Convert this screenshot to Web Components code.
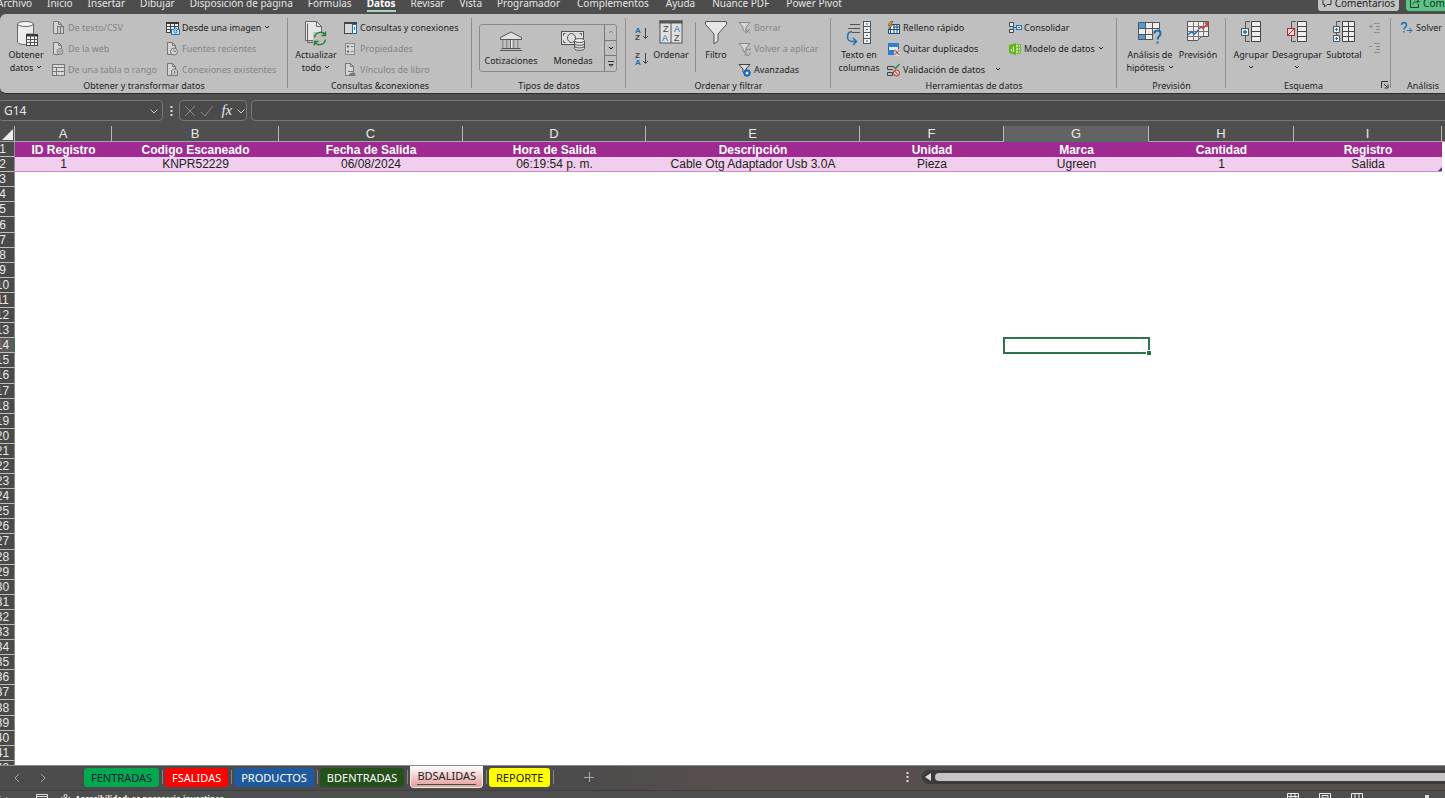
<!DOCTYPE html>
<html lang="es">
<head>
<meta charset="utf-8">
<title>Libro - BDSALIDAS</title>
<style>
  html, body { height: 100%; margin: 0; }
  body { overflow: hidden; background: #4f4f4f; font-family: "Noto Sans", "Open Sans", sans-serif; }
</style>
</head>
<body>
<excel-app></excel-app>
<script>
const DOC = (c = '#777') => `<path d="M1.5 .5h5l3 3v9h-8z" fill="#d4d4d4" stroke="${c}"/><path d="M6.5 .5v3h3" fill="none" stroke="${c}"/>`;
const FUNNEL = c => `<path d="M1 1.5h11L8 6v5.500L5 9V6z" fill="#d8d8d8" stroke="${c}"/>`;
const LETTER_AZ = (top, bottom, tc, bc) => `<g font-size="8" font-weight="700" font-family="Liberation Sans, sans-serif"><text x="0" y="7" fill="${tc}">${top}</text><text x="0" y="14" fill="${bc}">${bottom}</text></g><path d="M10.500 2v10.500M8 10l2.500 2.500 2.500-2.500" fill="none" stroke="#444"/>`;
/* Each entry: [width, height, markup] */
const ICONS = {
  getdata: [24, 28, `<path d="M3.500 4v18c0 1.500 3 2.500 8 2.500h1V14h7V4" fill="#ececec" stroke="#666"/><ellipse cx="11.500" cy="4" rx="8" ry="2.500" fill="#f4f4f4" stroke="#666"/><rect x="12.500" y="14.500" width="11" height="11" fill="#f4f4f4" stroke="#444"/><path d="M12 15.500h12" stroke="#333" stroke-width="2"/><path d="M12.500 19.500h11M12.500 22.500h11M16.500 15v10.500M20.500 15v10.500" stroke="#555"/>`],
  csv: [13, 14, DOC() + `<rect x="5.500" y="5.500" width="6" height="7" fill="#c8c8c8" stroke="#777"/><path d="M8.500 6v6" stroke="#777"/>`],
  web: [13, 14, DOC() + `<circle cx="8" cy="9.500" r="3" fill="#ccc" stroke="#888"/><path d="M5 9.500h6M8 6.500v6" stroke="#999"/>`],
  range: [13, 14, `<rect x=".5" y="1.500" width="12" height="11" fill="#d8d8d8" stroke="#777"/><path d="M.5 4.500h12M.5 8.500h12M4.500 4v8.500" stroke="#777"/>`],
  picture: [14, 14, `<rect x=".5" y="1.500" width="12" height="10" fill="#eee" stroke="#444"/><path d="M.5 2h12" stroke="#333" stroke-width="2"/><path d="M.5 5.500h12M.5 8.500h12M4.500 2v9M8.500 2v9" stroke="#444"/><path d="M5.500 8.500h2l1-1.500h2l1 1.500h2v5h-8z" fill="#d5e8f8" stroke="#1c6db5"/><circle cx="9.500" cy="10.500" r="1.500" fill="none" stroke="#1c6db5"/>`],
  recent: [13, 14, DOC() + `<circle cx="8" cy="9.500" r="3.500" fill="#d4d4d4" stroke="#777"/><path d="M8 7.500v2h2" fill="none" stroke="#777"/>`],
  existing: [13, 14, DOC() + `<path d="M5.500 12.500v-5l2-1.500h2l2 2v4.500z" fill="#c8c8c8" stroke="#777"/><path d="M8.500 8v3" stroke="#777"/>`],
  refresh: [24, 26, `<path d="M1.500 20.500V1.500h11l5 5v14z" fill="#e6e6e6" stroke="#666"/><path d="M3.500 3.500v19h8" fill="none" stroke="#666"/><path d="M12.500 1.500v5h5" fill="none" stroke="#666"/><path d="M9 12h14v13H9z" fill="#bfbfbf"/><path d="M10.500 17.500a6 6 0 0 1 10.500-3M21.500 19.500a6 6 0 0 1-10.500 3M21.500 11.500v4h-4M10.500 25.500v-4h4" fill="none" stroke="#2f7d3a" stroke-width="1.500"/>`],
  queries: [13, 14, `<rect x=".5" y="1.500" width="12" height="11" fill="#d8d8d8" stroke="#444"/><path d="M.5 2h12" stroke="#444" stroke-width="2"/><rect x="8.500" y="3.500" width="4" height="9" fill="#eef6ff" stroke="#1c6db5"/><path d="M10.500 6v3" stroke="#1c6db5"/>`],
  props: [13, 14, `<rect x="1.500" y="1.500" width="9" height="11" fill="#d6d6d6" stroke="#888"/><path d="M3 4.500h2M3 9.500h2" stroke="#666" stroke-width="2"/><path d="M6.500 4.500h3M6.500 9.500h3" stroke="#888"/>`],
  links: [13, 14, DOC() + `<path d="M4 8.500h4a1.500 1.500 0 0 1 0 3H5M6 10.500h5v2H6" fill="none" stroke="#777"/>`],
  bank: [24, 20, `<path d="M1.500 6.500L12 1l10.500 5.500v2h-21z" fill="#e0e0e0" stroke="#555"/><path d="M4.500 9v8M8.500 9v8M12 9v8M15.500 9v8M19.500 9v8" stroke="#666" stroke-width="2"/><path d="M5 9v8M9 9v8M12.500 9v8M16 9v8M20 9v8" stroke="#eee"/><path d="M2.500 17.500h19M1 19.500h22" stroke="#555"/>`],
  money: [26, 22, `<rect x="1.500" y="2.500" width="22" height="13" fill="#e0e0e0" stroke="#555"/><path d="M3.500 6.500v-2h2M21.500 6.500v-2h-2M3.500 11.500v2h2" fill="none" stroke="#555"/><ellipse cx="11.500" cy="9" rx="4" ry="4.500" fill="none" stroke="#555"/><path d="M14.500 12v7.500c0 2.500 10 2.500 10 0V12" fill="#e0e0e0" stroke="#555"/><ellipse cx="19.500" cy="11.500" rx="5" ry="2" fill="#eee" stroke="#555"/><path d="M14.500 14.500c0 2.500 10 2.500 10 0M14.500 17c0 2.500 10 2.500 10 0" fill="none" stroke="#555"/>`],
  az: [14, 15, LETTER_AZ('A', 'Z', '#1c6db5', '#444')],
  za: [14, 15, LETTER_AZ('Z', 'A', '#444', '#1c6db5')],
  sort: [24, 24, `<rect x="1" y="1" width="22" height="22" fill="#e0e0e0" stroke="#555"/><path d="M.5 2h23" stroke="#555" stroke-width="3"/><path d="M12 3v20" stroke="#555"/><g font-family="Liberation Sans, sans-serif" font-size="9"><text x="4" y="12" fill="#444">Z</text><text x="3" y="21" fill="#1c6db5">A</text><text x="15" y="12" fill="#1c6db5">A</text><text x="15" y="21" fill="#444">Z</text></g>`],
  filter: [24, 26, `<path d="M1.500 1.500h21v3L14 14v7l-4 3V14L1.500 4.500z" fill="#e6e6e6" stroke="#555"/>`],
  clear: [14, 14, FUNNEL('#888') + `<path d="M7.500 8l4.500 4.500M12 8l-4.500 4.500" stroke="#888"/>`],
  reapply: [14, 14, FUNNEL('#888') + `<path d="M6.500 10a3 3 0 0 1 5.500-1.500V6.500M12.500 10.500A3 3 0 0 1 7 12v1.500" fill="none" stroke="#888"/>`],
  advanced: [14, 14, FUNNEL('#444') + `<circle cx="9" cy="10" r="2.500" fill="#dbe8f4" stroke="#1c6db5" stroke-width="2"/><path d="M9 6v1.500M9 12.500V14M5 10h1.500M11.500 10H13M6 7l1 1M12 7l-1 1M6 13l1-1M12 13l-1-1" stroke="#1c6db5"/>`],
  columns: [26, 26, `<path d="M4 4.500h10M2 8.500h12M6 12.500h8" stroke="#555"/><path d="M6 11.500C0 12 0 21.500 6 21.500h4M7 18l3.500 3.500L7 25" fill="none" stroke="#2a6fb0" stroke-width="1.500"/><rect x="17.500" y="1.500" width="7" height="22" fill="#eee" stroke="#555"/><path d="M17.500 6.500h7M17.500 12.500h7M17.500 18.500h7" stroke="#555"/><path d="M20 4h2M20 9.500h2M20 15.500h2M20 21h2" stroke="#1c6db5"/>`],
  flash: [14, 14, `<path d="M3.500 3.500h9v9h-11v-5h2z" fill="#f0f4f8"/><path d="M3.500 12.500v-9h9v9zM1.500 8.500h11M1.500 12.500h11M1.500 8.500v4M7 3.500v9M10 3.500v9M6 6h6.500" fill="none" stroke="#1f4e80"/><path d="M3.500 .5L1 4.500h2L1.500 8.500 6 3.500H4L6 .5z" fill="#e8a317" stroke="#333" stroke-width=".5"/>`],
  dupes: [14, 14, `<path d="M1.500 1.500h10v11h-10z" fill="#eee" stroke="#1c5da5"/><path d="M1 1h11v4H1zM1 8h6v5H1z" fill="#2f7fd0"/><path d="M7 7h6v7H7z" fill="#d4d4d4"/><path d="M7.500 8l5 5M12.500 8l-5 5" stroke="#b52a2a"/>`],
  valid: [14, 14, `<path d="M7 3.500H.5v3H6M.5 9.500h5v3h-5z" fill="none" stroke="#444"/><path d="M6.500 3.500l2 2 4-4.500" fill="none" stroke="#2f8a3c" stroke-width="1.500"/><circle cx="9.500" cy="10" r="3" fill="#e6d5d5" stroke="#b52a2a"/><path d="M7.500 8l4 4" stroke="#b52a2a"/>`],
  consolidate: [14, 14, `<path d="M1.500 1.500h4v4h-4zM1.500 8.500h4v3h-4z" fill="#e8e8e8" stroke="#444"/><path d="M5.500 6.500h3M5.500 3.500v6" stroke="#1c6db5"/><rect x="8.500" y="4.500" width="5" height="4" fill="#dceaf8" stroke="#1c6db5"/><path d="M10 6.500h2" stroke="#1c6db5"/>`],
  model: [14, 14, `<path d="M1 3l7-2v12l-7-2z" fill="#62b41c"/><path d="M8.500 2.500h4v9h-4M8.500 5.500h4M8.500 8.500h4M10.500 3v8" fill="#c8e6a0" stroke="#6cbc28"/><path d="M3.500 9.500V7M5.500 10V4.500" stroke="#e8f8d0"/>`],
  whatif: [26, 26, `<path d="M1.500 2.500h21v17h-21z" fill="#eee"/><path d="M1.500 2.500h7v6h-7zM1.500 14h7v6h-7z" fill="#4f9be0"/><path d="M1.500 2.500h21v17h-21zM1.500 8.500h21M1.500 14.500h21M8.500 2.500v17M15.500 2.500v17" fill="none" stroke="#555"/><path d="M16 10h9v14h-9z" fill="#bfbfbf"/><path d="M17.500 13.500c0-4 6-4 6 0 0 3-3 3-3 6M20.500 21.500v2" fill="none" stroke="#1c6db5" stroke-width="2"/>`],
  forecast: [24, 24, `<path d="M1.500 1.500h21v15h-7l-4 4h-10z" fill="#eee" stroke="#555"/><path d="M1.500 6.500h21M1.500 11.500h21M1.500 16.500h14M7.500 1.500v19M12.500 1.500v18M17.500 1.500v15" stroke="#777"/><path d="M1.500 15l4-3 3 2 4-4" fill="none" stroke="#1c6db5" stroke-width="1.500"/><path d="M12.500 9l3-2 1.500 1.500 5-5.500M18.500 3h3.500v3.500" fill="none" stroke="#c23b3b" stroke-width="1.500"/>`],
  group: [22, 24, `<path d="M11.500 1.500h9v20h-9zM11.500 6.500h9M11.500 11.500h9M11.500 16.500h9" fill="#eee" stroke="#444"/><path d="M10 1.500H5.500v20H10" fill="none" stroke="#555"/><rect x="1.500" y="8.500" width="7" height="7" fill="#eee" stroke="#555"/><path d="M5 10v4M3 12h4" stroke="#1c6db5" stroke-width="1.500"/>`],
  ungroup: [22, 24, `<path d="M11.500 1.500h9v20h-9zM11.500 6.500h9M11.500 11.500h9M11.500 16.500h9" fill="#eee" stroke="#444"/><path d="M10 1.500H5.500v20H10" fill="none" stroke="#555"/><rect x="1.500" y="8.500" width="7" height="7" fill="#f0dada" stroke="#b52a2a"/><path d="M2 15l6-6" stroke="#b52a2a"/>`],
  subtotal: [24, 24, `<path d="M10.500 1.500h12v20h-12zM10.500 6.500h12M10.500 11.500h12M10.500 16.500h12M16.500 1.500v20" fill="#eee" stroke="#444"/><path d="M8.500 1.500h-4v17h4" fill="none" stroke="#555"/><path d="M1.500 6.500h6v6h-6zM1.500 15.500h6v6h-6z" fill="#eee" stroke="#555"/><path d="M4.500 8v3M3 9.500h3M4.500 17v3M3 18.500h3" stroke="#1c6db5"/>`],
  showdetail: [14, 14, `<path d="M1 5.500h4M3 3.500v4M6 2.500h6M8 5.500h4M8 8.500h4M6 11.500h6" stroke="#8c8c8c"/>`],
  hidedetail: [14, 14, `<path d="M1 4.500h3M6 1.500h6M8 4.500h4M8 7.500h4M6 10.500h6" stroke="#8c8c8c"/>`],
  solver: [14, 14, `<path d="M1.500 4c0-3.500 5-3.500 5 0 0 2.500-2.500 2-2.500 4.500M4 10v1.500" fill="none" stroke="#1c6db5" stroke-width="1.500"/><path d="M7 9.500h4.500M9.500 7l2.500 2.500L9.500 12" fill="none" stroke="#1c6db5"/>`],
  caret: [6, 6, `<path d="M1 2l2 2 2-2" fill="none" stroke="currentColor"/>`],
  caretup: [6, 6, `<path d="M1 4l2-2 2 2" fill="none" stroke="#888"/>`],
  more: [8, 8, `<path d="M1 1.500h6M2 4.500l2 2 2-2z" fill="none" stroke="#333"/>`],
  launcher: [8, 8, `<path d="M.5 7V.5H7M3 3l3.500 3.500M7 3.500V7H3.500" fill="none" stroke="#333"/>`],
  chevron: [10, 10, `<path d="M1.500 3.500L5 7l3.500-3.500" fill="none" stroke="#ccc"/>`],
  cross: [12, 12, `<path d="M1 1l10 10M11 1L1 11" stroke="#888"/>`],
  check: [14, 12, `<path d="M1 7l4 4 8-10" fill="none" stroke="#888"/>`],
  dots: [3, 10, `<path d="M.5 0h2v2h-2zM.5 4h2v2h-2zM.5 8h2v2h-2z" fill="#ddd"/>`],
  prev: [8, 10, `<path d="M6 1L2 5l4 4" fill="none" stroke="#aaa"/>`],
  next: [8, 10, `<path d="M2 1l4 4-4 4" fill="none" stroke="#aaa"/>`],
  plus: [10, 10, `<path d="M0 5.500h10M5.500 0v10" stroke="#aaa"/>`],
  comment: [10, 9, `<path d="M1 .5h8v5H5L2.500 8V5.500H1z" fill="none" stroke="#333"/>`],
  share: [10, 9, `<path d="M4 .5H.5v8h8V5M3 5.500C3 3 5 2.500 9 2.500M7 .5l2 2-2 2" fill="none" stroke="#1d3a29"/>`],
  macro: [12, 10, `<path d="M.5 .5h11v8H.5zM.5 2.500h11M3 5h3M8 5h2" fill="none" stroke="#ddd"/>`],
  access: [12, 10, `<circle cx="5.500" cy="2" r="1.500" fill="none" stroke="#eee"/><path d="M1 3.500l3 1v2L3 10M10 3.500l-3 1v2L8 10M4 4.500h3" fill="none" stroke="#eee"/>`],
  vnormal: [12, 10, `<path d="M.5 .5h11v9H.5zM.5 3.500h11M.5 6.500h11M4 .5v9M8 .5v9" fill="none" stroke="#eee"/>`],
  vpage: [12, 10, `<path d="M.5 .5h11v9H.5zM3 2.500h6v7H3zM4 5h4" fill="none" stroke="#eee"/>`],
  vbreak: [12, 10, `<path d="M.5 .5h11v9H.5zM4 .5v9M8 .5v9" fill="none" stroke="#eee"/>`]
};

class BaseElement extends HTMLElement {
  connectedCallback() {
    if (this.shadowRoot) return;
    const tpl = document.createElement('template');
    tpl.innerHTML = `<style>*{box-sizing:border-box}button{font:inherit;color:inherit;background:none;border:0;padding:0;margin:0}${this.css()}</style>${this.html()}`;
    this.attachShadow({ mode: 'open' }).append(tpl.content.cloneNode(true));
  }
  attr(name, fallback = '') { return this.getAttribute(name) ?? fallback; }
}
const define = (name, css, html) => customElements.define(name, class extends BaseElement {
  css() { return css; }
  html() { return html.call(this); }
});

define('x-icon', `:host{display:inline-block;line-height:0;flex:none}svg{display:block}`, function () {
  const [w, h, body] = ICONS[this.attr('name')];
  return `<svg width="${w}" height="${h}" viewBox="0 0 ${w} ${h}" aria-hidden="true">${body}</svg>`;
});

define('menu-tab', `
  :host{display:block}
  button{display:block;font-size:10px;line-height:14px;white-space:nowrap;color:#e6e6e6}
  :host([active]) button{font-weight:700;border-bottom:2px solid #a5d8bd;color:#fff}`,
  function () { return `<button type="button" role="tab"><slot></slot></button>`; });

define('menu-bar', `
  :host{display:flex;height:14px;overflow:hidden;background:#4d4d4d;justify-content:space-between;align-items:flex-start;flex:none}
  nav{display:flex;gap:15px;margin:-4px 0 0 -3px}
  .spaced{margin-left:2px}
  .actions{display:flex;gap:7px;margin-right:-30px}
  .actions button{display:flex;align-items:center;gap:3px;height:20px;margin-top:-9px;padding:4px 4px 0;border-radius:3px;background:#c3c3c3;color:#222;font-size:10px;line-height:12px}
  .actions .share{background:#5cc486;color:#12311f}`, function () {
  const tabs = ['Archivo', 'Inicio', 'Insertar', 'Dibujar', 'Disposición de página', 'Fórmulas', 'Datos', 'Revisar', 'Vista', 'Programador', 'Complementos', 'Ayuda', 'Nuance PDF', 'Power Pivot'];
  return `<nav role="tablist">${tabs.map((t, i) => `<menu-tab${t === 'Datos' ? ' active' : ''}${i > 9 ? ' class="spaced"' : ''}>${t}</menu-tab>`).join('')}</nav>
  <div class="actions"><button type="button"><x-icon name="comment"></x-icon>Comentarios</button><button type="button" class="share"><x-icon name="share"></x-icon>Compartir</button></div>`;
});

define('ribbon-button', `
  :host{display:block;flex:none}
  button{display:flex;align-items:center;gap:2px;height:21px;font-size:9px;line-height:13px;color:#222;white-space:nowrap}
  x-icon.main{width:14px}
  button:disabled{color:#858585}
  :host([large]) button{flex-direction:column;align-items:center;gap:0;width:100%;height:60px;padding-top:3px}
  :host([large]) .main{display:flex;width:auto;height:28px;justify-content:center;align-items:flex-start}
  .label{text-align:center}
  .label x-icon{margin-left:3px;vertical-align:1px}
  :host([large]) .stack{margin-left:0}`, function () {
  const caret = this.hasAttribute('caret') ? `<x-icon class="${this.attr('caret')}" name="caret"></x-icon>` : '';
  return `<button type="button"${this.hasAttribute('off') ? ' disabled' : ''}><x-icon class="main" name="${this.attr('icon')}"></x-icon><span class="label"><slot></slot>${caret}</span></button>`;
});

define('ribbon-group', `
  :host{display:flex;flex-direction:column;flex:none;position:relative;height:79px;padding-top:3px}
  :host::after{content:"";position:absolute;right:0;top:4px;bottom:5px;width:1px;background:#8e8e8e}
  :host([last])::after{display:none}
  .body{display:flex;height:63px}
  .label{font-size:9px;line-height:12px;text-align:center;color:#222;display:flex;align-items:center}
  .label span{flex:1}
  .label button{margin-right:2px}`, function () {
  return `<div class="body"><slot></slot></div><div class="label"><span>${this.attr('label')}</span>${this.hasAttribute('launcher') ? '<button type="button" aria-label="Configuración"><x-icon name="launcher"></x-icon></button>' : ''}</div>`;
});

define('type-gallery', `
  :host{display:flex;width:138px;height:48px;margin:7px 0 0 7px;border:1px solid #8a8a8a;border-radius:3px;overflow:hidden}
  .item{flex:1;display:flex;flex-direction:column;align-items:center;justify-content:flex-end;font-size:9px;line-height:13px;color:#222;padding-bottom:4px;gap:3px}
  .scroll{width:12px;display:flex;flex-direction:column;border-left:1px solid #777}
  .scroll button{flex:1;display:flex;align-items:center;justify-content:center}
  .scroll button + button{border-top:1px solid #777}`, function () {
  return `<button type="button" class="item"><x-icon name="bank"></x-icon>Cotizaciones</button><button type="button" class="item"><x-icon name="money"></x-icon>Monedas</button>
  <div class="scroll"><button type="button" aria-label="Arriba"><x-icon name="caretup"></x-icon></button><button type="button" aria-label="Abajo"><x-icon name="caret"></x-icon></button><button type="button" aria-label="Más"><x-icon name="more"></x-icon></button></div>`;
});

const B = (icon, label, extra = '') => `<ribbon-button icon="${icon}" ${extra}>${label}</ribbon-button>`;
define('excel-ribbon', `
  :host{display:flex;flex:none;height:80px;overflow:hidden;background:#bfbfbf;border-radius:6px 0 0 6px;border-bottom:1px solid #2c2c2c}
  .get{width:288px}.queries{width:184px}.types{width:154px}.order{width:205px}.tools{width:286px}.forecast{width:109px}.outline{width:165px}.analysis{flex:1 0 64px}
  .w40{width:40px}.w46{width:46px}.w48{width:48px}.w52{width:52px}.w56{width:56px}
  .c114{width:114px}.c120{width:121px}
  .gap2{margin-left:2px}.gap9{margin-left:9px}
  .sorts{display:flex;flex-direction:column;gap:4px;padding-top:6px}
  .line{width:1px;height:50px;margin:5px 0 0 4px;background:#8e8e8e}`, function () {
  return `
  <ribbon-group class="get" label="Obtener y transformar datos">
    ${B('getdata', 'Obtener<br>datos', 'large caret class="w52"')}
    <div class="c114">${B('csv', 'De texto/CSV', 'off')}${B('web', 'De la web', 'off')}${B('range', 'De una tabla o rango', 'off')}</div>
    <div>${B('picture', 'Desde una imagen', 'caret')}${B('recent', 'Fuentes recientes', 'off')}${B('existing', 'Conexiones existentes', 'off')}</div>
  </ribbon-group>
  <ribbon-group class="queries" label="Consultas &amp;conexiones">
    ${B('refresh', 'Actualizar<br>todo', 'large caret class="w56"')}
    <div>${B('queries', 'Consultas y conexiones')}${B('props', 'Propiedades', 'off')}${B('links', 'Vínculos de libro', 'off')}</div>
  </ribbon-group>
  <ribbon-group class="types" label="Tipos de datos"><type-gallery></type-gallery></ribbon-group>
  <ribbon-group class="order" label="Ordenar y filtrar">
    <div class="sorts gap9">${B('az', '', 'title="Ordenar de A a Z"')}${B('za', '', 'title="Ordenar de Z a A"')}</div>
    ${B('sort', 'Ordenar', 'large class="w40"')}
    <div class="line"></div>
    ${B('filter', 'Filtro', 'large class="w40"')}
    <div class="gap2">${B('clear', 'Borrar', 'off')}${B('reapply', 'Volver a aplicar', 'off')}${B('advanced', 'Avanzadas')}</div>
  </ribbon-group>
  <ribbon-group class="tools" label="Herramientas de datos">
    ${B('columns', 'Texto en<br>columnas', 'large class="w56"')}
    <div class="c120">${B('flash', 'Relleno rápido')}${B('dupes', 'Quitar duplicados')}${B('valid', 'Validación de datos&nbsp;&nbsp;&nbsp;', 'caret')}</div>
    <div>${B('consolidate', 'Consolidar')}${B('model', 'Modelo de datos', 'caret')}</div>
  </ribbon-group>
  <ribbon-group class="forecast" label="Previsión">
    ${B('whatif', 'Análisis de<br>hipótesis', 'large caret class="w48 gap9"')}
    ${B('forecast', 'Previsión', 'large class="w48"')}
  </ribbon-group>
  <ribbon-group class="outline" label="Esquema" launcher>
    ${B('group', 'Agrupar<br>', 'large caret="stack" class="w46 gap2"')}
    ${B('ungroup', 'Desagrupar<br>', 'large caret="stack" class="w46"')}
    ${B('subtotal', 'Subtotal', 'large class="w48"')}
    <div>${B('showdetail', '', 'off')}${B('hidedetail', '', 'off')}</div>
  </ribbon-group>
  <ribbon-group class="analysis" label="Análisis" last><div class="gap9">${B('solver', 'Solver')}</div></ribbon-group>`;
});

define('formula-bar', `
  :host{display:flex;flex:none;height:32px;padding:6px 0 5px;background:#4f4f4f;font-family:"Noto Sans",sans-serif;color:#e6e6e6}
  .box{display:flex;align-items:center;height:21px;border:1px solid #777;border-radius:4px;background:#4a4a4a}
  .name{width:165px;margin-left:-2px;padding:0 3px 0 5px}
  input{flex:1;min-width:0;background:none;border:0;padding:0;outline:0;color:inherit;font:12px "Noto Sans",sans-serif}
  .dots{width:16px;display:flex;align-items:center;justify-content:center}
  .fx{width:68px;justify-content:space-between;padding:0 0 0 4px}
  .fx i{font:italic 15px "Liberation Serif",serif;margin-left:4px}
  .value{flex:1;margin:0 -4px 0 4px}`, function () {
  return `<div class="box name"><input aria-label="Cuadro de nombres" value="G14"><x-icon name="chevron"></x-icon></div>
  <div class="dots"><x-icon name="dots"></x-icon></div>
  <div class="box fx"><x-icon name="cross"></x-icon><x-icon name="check"></x-icon><i>fx</i><x-icon name="chevron"></x-icon></div>
  <div class="box value"><input aria-label="Barra de fórmulas"></div>`;
});

define('sheet-grid', `
  :host{display:block;flex:1;min-height:0;overflow:hidden;background:#fff}
  table{border-collapse:separate;border-spacing:0;table-layout:fixed;width:calc(100% + 9px);height:calc(100% + 11px);margin-left:-9px;font:12px "Liberation Sans",Arial,sans-serif;color:#222}
  th,td{padding:0;line-height:14px;text-align:center;white-space:nowrap;overflow:visible}
  thead th{height:16px;font-size:13px;font-weight:400;color:#e8e8e8;background:#4f4f4f;border-right:1px solid #b8b8b8;border-bottom:1px solid #a8a8a8}
  thead th:last-child{border-right:0}
  thead .sel{background:#636363;border-bottom-color:#3d7a56}
  .corner svg{display:block;margin-left:auto;margin-right:1px}
  tbody th,.data td{line-height:13px;padding-top:1px}
  tbody th{font-weight:400;color:#e8e8e8;background:#4a4a4a;border-right:1px solid #8a8a8a;border-bottom:1px solid #bdbdbd}
  tbody .selrow{background:#5c5c5c;border-right-color:#2f7a50}
  .head td{background:#9e2a92;color:#fff;font-weight:700}
  .data td{background:#f2ceee;border-bottom:1px solid #c78fc9}
  .head td.rest,.data td.rest{background:#fff;border:0}
  td{position:relative}
  td.end::after{content:"";position:absolute;right:0;bottom:0;border:2px solid #3a3aa8;border-top-color:transparent;border-left-color:transparent}
  td.cell{outline:2px solid #2c7350;outline-offset:-1px}
  td.cell::after{content:"";position:absolute;right:-2px;bottom:-2px;width:4px;height:4px;background:#217346;border:solid #fff;border-width:1px 0 0 1px;box-sizing:content-box}`, function () {
  const cols = [['A', 97], ['B', 167], ['C', 184], ['D', 183], ['E', 214], ['F', 144], ['G', 145], ['H', 145], ['I', 148]];
  const head = ['ID Registro', 'Codigo Escaneado', 'Fecha de Salida', 'Hora de Salida', 'Descripción', 'Unidad', 'Marca', 'Cantidad', 'Registro'];
  const data = ['1', 'KNPR52229', '06/08/2024', '06:19:54 p. m.', 'Cable Otg Adaptador Usb 3.0A', 'Pieza', 'Ugreen', '1', 'Salida'];
  const row = n => {
    const th = `<th scope="row"${n === 14 ? ' class="selrow"' : ''}>${n}</th>`;
    if (n === 1) return `<tr class="head">${th}${head.map(c => `<td>${c}</td>`).join('')}<td class="rest"></td></tr>`;
    if (n === 2) return `<tr class="data">${th}${data.map((c, i) => `<td${i === 8 ? ' class="end"' : ''}>${c}</td>`).join('')}<td class="rest"></td></tr>`;
    return `<tr>${th}${cols.map(c => `<td${n === 14 && c[0] === 'G' ? ' class="cell"' : ''}></td>`).join('')}<td></td></tr>`;
  };
  return `<table><colgroup><col style="width:24px">${cols.map(c => `<col style="width:${c[1]}px">`).join('')}<col></colgroup>
  <thead><tr><th class="corner"><svg width="12" height="12" viewBox="0 0 12 12"><path d="M12 1v11H1z" fill="#eee"/></svg></th>${cols.map(c => `<th scope="col"${c[0] === 'G' ? ' class="sel"' : ''}>${c[0]}</th>`).join('')}<th></th></tr></thead>
  <tbody>${Array.from({ length: 42 }, (_, i) => row(i + 1)).join('')}</tbody></table>`;
});

define('sheet-tab', `
  :host{display:flex;align-items:center;gap:3px;height:22px;flex:none}
  :host::after{content:"";width:1px;height:14px;background:#858585;margin-right:2px}
  button{height:19px;margin-top:1px;padding:0 7px;border-radius:3px;background:var(--tab);color:var(--ink,#fff);font-size:11px;line-height:19px}
  :host([active]) button{height:22px;margin-top:0;border:1px solid #eee;border-top:0;border-radius:0 0 4px 4px;background:linear-gradient(#fff,#e79a9a);padding:0 6px 2px}
  :host([active]) span{display:block;line-height:17px;border-bottom:1px solid #2d5b35}`,
  function () { return `<button type="button" role="tab"><span><slot></slot></span></button>`; });

define('sheet-tabs', `
  :host{display:flex;flex:none;height:25px;border-top:1px solid #8b8b8b;background:linear-gradient(90deg,#4c4b4b 0,#4c4b4b 40%,#574f4e 50%);align-items:flex-start}
  .nav{display:flex;gap:18px;width:84px;padding-left:13px;height:22px;align-items:center}
  .tabs{display:flex}
  .add{margin-left:28px;height:22px;display:flex;align-items:center}
  .scroll{display:flex;align-items:center;width:539px;gap:13px;margin-left:auto;height:22px}
  .track{flex:1;height:14px;background:#3c3b3b;border-radius:7px 0 0 7px;display:flex;align-items:center;gap:4px;padding-left:3px}
  .track i{border:4px solid transparent;border-right:6px solid #ddd;border-left:0}
  .thumb{flex:1;height:8px;border-radius:4px 0 0 4px;background:#c6c4c4}`, function () {
  const tabs = [['FENTRADAS', '#00a850', '#123'], ['FSALIDAS', '#fe0000', '#fff'], ['PRODUCTOS', '#1f5a9e', '#fff'], ['BDENTRADAS', '#24501a', '#fff'], ['BDSALIDAS', '#fff', '#222'], ['REPORTE', '#ffff00', '#222']];
  return `<div class="nav"><button type="button" aria-label="Anterior"><x-icon name="prev"></x-icon></button><button type="button" aria-label="Siguiente"><x-icon name="next"></x-icon></button></div>
  <div class="tabs" role="tablist">${tabs.map(([t, c, k]) => `<sheet-tab style="--tab:${c};--ink:${k}"${t === 'BDSALIDAS' ? ' active' : ''}>${t}</sheet-tab>`).join('')}</div>
  <button type="button" class="add" aria-label="Nueva hoja"><x-icon name="plus"></x-icon></button>
  <div class="scroll"><x-icon name="dots"></x-icon><div class="track"><i></i><div class="thumb"></div></div></div>`;
});

define('status-bar', `
  :host{display:flex;flex:none;height:8px;overflow:hidden;border-top:1px solid #3f3f3f;background:#4e4e4e;color:#f2f2f2;font-size:9px;line-height:12px;align-items:flex-start}
  .ready{width:42px;margin-left:-6px}
  .item{display:flex;gap:3px;padding-top:3px}
  .macro{width:24px}
  b{margin-top:-1px;font-size:8px}
  .views{display:flex;gap:20px;margin-left:auto;padding-top:2px;width:158px}
  .knob{width:4px;height:8px;background:#ddd;margin:2px 0 0 42px}`, function () {
  return `<span class="item ready">Listo</span><span class="item macro"><x-icon name="macro"></x-icon></span><span class="item"><x-icon name="access"></x-icon><b>Accesibilidad: es necesario investigar</b></span>
  <div class="views"><x-icon name="vnormal"></x-icon><x-icon name="vpage"></x-icon><x-icon name="vbreak"></x-icon><div class="knob"></div></div>`;
});

define('excel-app', `:host{display:flex;flex-direction:column;height:100vh;overflow:hidden;background:#4f4f4f}`, function () {
  return `<menu-bar></menu-bar><excel-ribbon></excel-ribbon><formula-bar></formula-bar><sheet-grid></sheet-grid><sheet-tabs></sheet-tabs><status-bar></status-bar>`;
});
</script>
</body>
</html>
